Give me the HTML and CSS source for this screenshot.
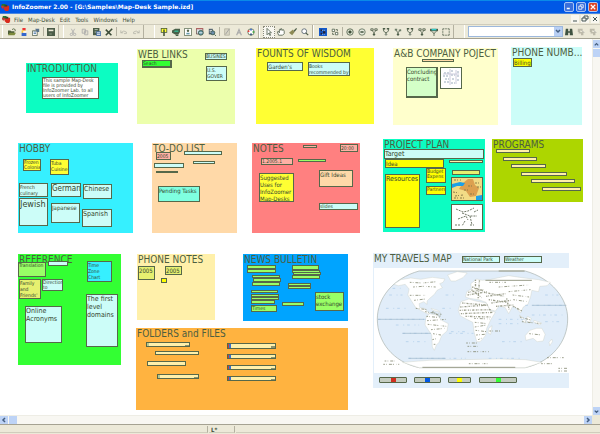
FILE: index.html
```html
<!DOCTYPE html>
<html lang="en">
<head>
<meta charset="utf-8">
<title>InfoZoomer 2.00 - [G:\Samples\Map-Desk Sample.izd]</title>
<link rel="stylesheet" href="styles.css">
</head>
<body>
<svg class="defs" aria-hidden="true">
  <symbol id="i-logo" viewBox="0 0 10 10"><path d="M1 1h4v4H0z" fill="#1f7a2e"/><path d="M0 3h3v3H1z" fill="#c33"/><path d="M4 3h5v4l-1 2H5L3 7z" fill="#d92b1c"/><path d="M4 2h3v2H4z" fill="#2a4a2a"/></symbol>
  <symbol id="i-open" viewBox="0 0 10 10"><path d="M0 3h3l1 1h4v4H0z" fill="#4c5c38"/><path d="M2 6h8L8 9H0z" fill="#7d8a3c"/><path d="M5 2q2-2 4 0v2" fill="none" stroke="#4c5c38"/></symbol>
  <symbol id="i-new" viewBox="0 0 10 10"><path d="M3 0h4v3H3z" fill="#e33"/><path d="M2 3h5v3H2z" fill="#fc3"/><path d="M2 6h6v4H2z" fill="#36c"/><path d="M4 4h4v2H4z" fill="#fff"/></symbol>
  <symbol id="i-props" viewBox="0 0 10 10"><path d="M.5 3.500h6v6h-6z" fill="#fff" stroke="#4c5c48"/><path d="M4 1h5v4H6z" fill="#57718c"/><path d="M2 5h3M2 7h3" stroke="#369"/></symbol>
  <symbol id="i-save" viewBox="0 0 10 10"><path d="M0 0h10v10H0z" fill="#4c5c48"/><path d="M2 2h6v2H2z" fill="#ece9d8"/><path d="M3 7h3v1H3z" fill="#9aa78a"/></symbol>
  <symbol id="i-cut" viewBox="0 0 10 10"><path d="M3 1l3 6M7 1L4 7" stroke="#aaa" fill="none"/><circle cx="3" cy="8" r="1.500" fill="none" stroke="#aaa"/><circle cx="7" cy="8" r="1.500" fill="none" stroke="#aaa"/></symbol>
  <symbol id="i-copy" viewBox="0 0 10 10"><path d="M1.500 1.500h4v5h-4zM4.500 3.500h4v5h-4z" fill="#e4e1d0" stroke="#aaa"/></symbol>
  <symbol id="i-paste" viewBox="0 0 10 10"><path d="M0 0h8v9H0z" fill="#4c5c48"/><path d="M4 4h6v6H4z" fill="#57a"/><path d="M2 2h4M2 5h2" stroke="#cdc"/><path d="M5 6h4M5 8h4" stroke="#fff"/></symbol>
  <symbol id="i-delete" viewBox="0 0 10 10"><path d="M1 2l7 7M9 1L1 9" stroke="#3c4c38" stroke-width="2"/></symbol>
  <symbol id="i-undo" viewBox="0 0 10 10"><path d="M1 3v3h3M1 6q4-4 7-1v2H5" fill="none" stroke="#b5b5aa"/></symbol>
  <symbol id="i-redo" viewBox="0 0 10 10"><path d="M9 3v3H6M9 6Q5 2 2 5v2h3" fill="none" stroke="#b5b5aa"/></symbol>
  <symbol id="i-sign" viewBox="0 0 10 10"><path d="M1 0h8v6H1z" fill="#4c5c38"/><path d="M2 1h6v4H2z" fill="#ff3"/><path d="M4 2h2v8H4z" fill="#4c5c38"/></symbol>
  <symbol id="i-cup" viewBox="0 0 10 10"><path d="M0 3l4-2h6v4L8 8H4L0 6z" fill="#486048"/><path d="M2 4l2-1h4v2H4z" fill="#39b08a"/><path d="M4 8h4v2H5z" fill="#486048"/></symbol>
  <symbol id="i-card" viewBox="0 0 10 10"><path d="M.5.500h9v9h-9z" fill="#fff" stroke="#57684c"/><circle cx="5" cy="3.500" r="1.500" fill="#57684c"/><path d="M3 8V6h4v2z" fill="#69a"/></symbol>
  <symbol id="i-web" viewBox="0 0 10 10"><path d="M.5.500h8v7h-8z" fill="#d9e0e8" stroke="#6a4c48"/><path d="M0 1h9" stroke="#c55"/><circle cx="6" cy="6" r="3" fill="#69a" stroke="#354"/><path d="M4 6h4" stroke="#fff"/></symbol>
  <symbol id="i-doc" viewBox="0 0 10 10"><path d="M1 1h5v7H1z" fill="#4c5c68"/><circle cx="6" cy="6" r="2.500" fill="#6c8cac" stroke="#354"/><path d="M2 3h3M2 5h2" stroke="#fff"/><path d="M8 8l2 2" stroke="#354"/></symbol>
  <symbol id="i-pen" viewBox="0 0 10 10"><path d="M2 1h6v8H2z" fill="#d8d5c4" stroke="#b5b2a2"/><path d="M3 8l5-7" stroke="#999"/></symbol>
  <symbol id="i-text" viewBox="0 0 10 10"><path d="M2 9l3-7 3 7M3 6h4" fill="none" stroke="#aaa" stroke-width="1.500"/></symbol>
  <symbol id="i-palette" viewBox="0 0 10 10"><circle cx="5" cy="5" r="4" fill="#fff" stroke="#57684c"/><path d="M1 3h2v2H1z" fill="#e33"/><path d="M4 1h2v2H4z" fill="#36c"/><path d="M7 4h2v2H7z" fill="#3a3"/><path d="M4 7h2v2H4z" fill="#247"/></symbol>
  <symbol id="i-cursor" viewBox="0 0 10 10"><path d="M2.500.500v8l2-2 1.500 3 1-.500-1.500-3H8z" fill="#fff" stroke="#4c5c48"/></symbol>
  <symbol id="i-hand" viewBox="0 0 10 10"><path d="M2 9L.5 5l1-1L3 6V2l1-1 1 2V1h1l1 2 1-1 1 2v3L7 9z" fill="#fff" stroke="#4c5c48"/></symbol>
  <symbol id="i-brush" viewBox="0 0 10 10"><path d="M0 6l5-4 2 3-3 4z" fill="#8c8a55"/><path d="M6 3l3-3 1 1-3 4z" fill="#4c5c48"/></symbol>
  <symbol id="i-zoom" viewBox="0 0 10 10"><circle cx="4" cy="4" r="3" fill="#fff" stroke="#4c5c68"/><path d="M6 6l3 3" stroke="#4c5c48" stroke-width="1.500"/></symbol>
  <symbol id="i-sel" viewBox="0 0 10 10"><path d="M0 0h10v10H0z" fill="#1559c9"/><path d="M2 2h2v2H2zM5 4h3v3H5zM2 6h2v2H2z" fill="#223"/><path d="M4 3h4M4 8h4" stroke="#cde" stroke-dasharray="1"/></symbol>
  <symbol id="i-swap" viewBox="0 0 10 10"><path d="M1.500 1.500h3v3h-3zM5.500 5.500h3v3h-3z" fill="#fff" stroke="#4c5c48"/><path d="M6 2h2v2M2 6v2h2" stroke="#4c5c48" fill="none"/></symbol>
  <symbol id="i-in" viewBox="0 0 10 10"><circle cx="5" cy="5" r="4" fill="#dfe5d2" stroke="#4c5c48"/><path d="M3 5h4M5 3v4" stroke="#354630" stroke-width="2"/></symbol>
  <symbol id="i-out" viewBox="0 0 10 10"><circle cx="5" cy="5" r="4" fill="#e6e9dc" stroke="#5c6c58"/><path d="M3 5h4" stroke="#4c5c48" stroke-width="2"/></symbol>
  <symbol id="i-n1" viewBox="0 0 10 10"><path d="M1 1h3v2H1zM6 1h3v2H6zM2.500 3l2.500 3 2.500-3M5 6v1" fill="none" stroke="#4c5c48"/><circle cx="5" cy="8" r="1.500" fill="#4c5c48"/></symbol>
  <symbol id="i-n2" viewBox="0 0 10 10"><path d="M2 1v3l3 2 3-2V1M5 6v1" fill="none" stroke="#4c5c48"/><path d="M1 0h3v2H1zM6 0h3v2H6z" fill="#4c5c48"/><circle cx="5" cy="8" r="1" fill="#fff" stroke="#4c5c48"/></symbol>
  <symbol id="i-n3" viewBox="0 0 10 10"><path d="M2 2l3 4 3-4M5 6v1" fill="none" stroke="#4c5c48"/><path d="M1 1h3v2H1zM6 2h3v2H6z" fill="#6c7c68"/><circle cx="5" cy="8" r="1.500" fill="#4c5c48"/></symbol>
  <symbol id="i-n4" viewBox="0 0 10 10"><path d="M0 1h10v3H0z" fill="#4c5c48"/><path d="M2 1h6v2H2z" fill="#3cc"/><path d="M2 4l3 3 3-3M5 6v4" fill="none" stroke="#4c5c48"/></symbol>
  <symbol id="i-frame" viewBox="0 0 10 10"><path d="M1 3V1h2M7 1h2v2M9 7v2H7M3 9H1V7M4 1h2M1 4v2M9 4v2M4 9h2" fill="none" stroke="#4c5c48"/></symbol>
  <symbol id="i-find" viewBox="0 0 10 10"><path d="M1 1h3v3h2V1h3l1 8H6V6H4v3H0z" fill="#3e5240"/></symbol>
  <symbol id="i-next" viewBox="0 0 10 10"><path d="M1 1h6v2H4v2h4v4H5V7H2V5H1z" fill="#bdbaaa"/><path d="M6 3l3 3" stroke="#999"/></symbol>
</svg>

<header class="titlebar">
  <svg class="logo"><use href="#i-logo"/></svg>
  <h1 class="titlebar-text">InfoZoomer 2.00 - [G:\Samples\Map-Desk Sample.izd]</h1>
  <button class="win-btn" aria-label="Minimize"><svg viewBox="0 0 8 8"><path d="M1 6h4" stroke="#fff" stroke-width="2"/></svg></button>
  <button class="win-btn" aria-label="Restore"><svg viewBox="0 0 8 8"><path d="M3 3V1h4v4H5M1 3h4v4H1z" fill="none" stroke="#fff"/></svg></button>
  <button class="win-btn win-close" aria-label="Close"><svg viewBox="0 0 8 8"><path d="M1 1l6 6M7 1L1 7" stroke="#fff" stroke-width="1.500"/></svg></button>
</header>

<nav class="menubar">
  <svg class="logo"><use href="#i-logo"/></svg>
  <button class="menu">File</button>
  <button class="menu">Map-Desk</button>
  <button class="menu">Edit</button>
  <button class="menu">Tools</button>
  <button class="menu">Windows</button>
  <button class="menu">Help</button>
  <span class="spacer"></span>
  <button class="doc-btn" aria-label="Minimize document"><svg viewBox="0 0 8 8"><path d="M2 6h4" stroke="#455"/></svg></button>
  <button class="doc-btn" aria-label="Restore document"><svg viewBox="0 0 8 8"><path d="M3 3V1h4v3H5M1 3h4v3H1z" fill="none" stroke="#455"/></svg></button>
  <button class="doc-btn" aria-label="Close document"><svg viewBox="0 0 8 8"><path d="M2 2l4 4M6 2L2 6" stroke="#455"/></svg></button>
</nav>

<div class="toolbar">
  <div class="group">
    <button class="tool" aria-label="Open"><svg><use href="#i-open"/></svg></button>
    <button class="tool" aria-label="New"><svg><use href="#i-new"/></svg></button>
    <button class="tool" aria-label="Properties"><svg><use href="#i-props"/></svg></button>
    <span class="sep"></span>
    <button class="tool" aria-label="Save"><svg><use href="#i-save"/></svg></button>
  </div>
  <div class="group group-next">
    <button class="tool" aria-label="Cut"><svg><use href="#i-cut"/></svg></button>
    <button class="tool" aria-label="Copy"><svg><use href="#i-copy"/></svg></button>
    <button class="tool" aria-label="Paste"><svg><use href="#i-paste"/></svg></button>
    <button class="tool" aria-label="Delete"><svg><use href="#i-delete"/></svg></button>
    <span class="sep"></span>
    <button class="tool" aria-label="Undo"><svg><use href="#i-undo"/></svg></button>
    <button class="tool" aria-label="Redo"><svg><use href="#i-redo"/></svg></button>
  </div>
  <div class="group group-apart">
    <button class="tool" aria-label="Add sign"><svg><use href="#i-sign"/></svg></button>
    <button class="tool" aria-label="Add board"><svg><use href="#i-cup"/></svg></button>
    <button class="tool" aria-label="Add picture"><svg><use href="#i-card"/></svg></button>
    <button class="tool" aria-label="Add web link"><svg><use href="#i-web"/></svg></button>
    <button class="tool" aria-label="Add document"><svg><use href="#i-doc"/></svg></button>
    <span class="sep"></span>
    <button class="tool" aria-label="Edit text"><svg><use href="#i-pen"/></svg></button>
    <button class="tool" aria-label="Font"><svg><use href="#i-text"/></svg></button>
    <button class="tool" aria-label="Colors"><svg><use href="#i-palette"/></svg></button>
  </div>
  <div class="group">
    <button class="tool tool-on" aria-label="Select"><svg><use href="#i-cursor"/></svg></button>
    <button class="tool" aria-label="Pan"><svg><use href="#i-hand"/></svg></button>
    <button class="tool" aria-label="Brush"><svg><use href="#i-brush"/></svg></button>
    <button class="tool" aria-label="Zoom"><svg><use href="#i-zoom"/></svg></button>
  </div>
  <div class="group">
    <button class="tool" aria-label="Overview"><svg><use href="#i-sel"/></svg></button>
    <button class="tool" aria-label="Swap"><svg><use href="#i-swap"/></svg></button>
    <span class="sep"></span>
    <button class="tool" aria-label="Zoom in"><svg><use href="#i-in"/></svg></button>
    <button class="tool" aria-label="Zoom out"><svg><use href="#i-out"/></svg></button>
    <button class="tool" aria-label="Level one"><svg><use href="#i-n1"/></svg></button>
    <button class="tool" aria-label="Level two"><svg><use href="#i-n2"/></svg></button>
    <button class="tool" aria-label="Level three"><svg><use href="#i-n3"/></svg></button>
    <button class="tool" aria-label="Level four"><svg><use href="#i-n2"/></svg></button>
    <button class="tool" aria-label="Level five"><svg><use href="#i-n1"/></svg></button>
    <button class="tool" aria-label="Filter"><svg><use href="#i-n4"/></svg></button>
    <button class="tool" aria-label="Fit frame"><svg><use href="#i-frame"/></svg></button>
  </div>
  <div class="group group-apart group-search">
    <div class="search-box">
      <select class="search" aria-label="Search text"><option></option></select>
      <svg class="search-arrow" viewBox="0 0 8 9"><path d="M2 3l2 2 2-2" fill="none" stroke="#445e80" stroke-width="1.500"/></svg>
    </div>
    <button class="tool" aria-label="Find"><svg><use href="#i-find"/></svg></button>
    <button class="tool" aria-label="Find next"><svg><use href="#i-next"/></svg></button>
    <button class="tool" aria-label="Find previous"><svg><use href="#i-next"/></svg></button>
  </div>
</div>

<div class="workspace">
  <main class="desk" id="desk"></main>
  <div class="scroll scroll-v">
    <button class="arrow" aria-label="Scroll up"><svg viewBox="0 0 8 8"><path d="M2 5l2-2 2 2" fill="none" stroke="#445e80" stroke-width="1.500"/></svg></button>
    <span class="thumb"></span>
    <span class="spacer"></span>
    <button class="arrow" aria-label="Scroll down"><svg viewBox="0 0 8 8"><path d="M2 3l2 2 2-2" fill="none" stroke="#445e80" stroke-width="1.500"/></svg></button>
  </div>
  <div class="scroll scroll-h">
    <button class="arrow" aria-label="Scroll left"><svg viewBox="0 0 8 8"><path d="M5 2L3 4l2 2" fill="none" stroke="#445e80" stroke-width="1.500"/></svg></button>
    <span class="thumb"></span>
    <span class="spacer"></span>
    <button class="arrow" aria-label="Scroll right"><svg viewBox="0 0 8 8"><path d="M3 2l2 2-2 2" fill="none" stroke="#445e80" stroke-width="1.500"/></svg></button>
  </div>
</div>

<footer class="status">
  <span class="cell cell-main"></span>
  <span class="cell cell-mark">L*</span>
  <span class="cell cell-rest"></span>
</footer>

<template id="world">
  <svg class="world" viewBox="24 69 588 315" preserveAspectRatio="none" role="img" aria-label="World map">
    <path class="sea" d="M160 78H480C560 100 608 160 608 222C608 290 560 350 480 368H160C80 350 34 290 34 222C34 160 80 100 160 78Z"/>
    <g class="land">
      <path d="M84 118L105 104L135 99L165 103L200 97L238 102L232 112L222 116L230 128L214 136L206 148L192 160L184 168L184 178L174 170L160 176L162 188L176 190L192 207L184 206L150 188L136 166L126 150L130 132L118 118L98 122Z"/>
      <path d="M190 206L214 210L228 226L248 236L244 258L228 272L220 292L212 300L206 316L200 306L198 270L178 240L180 220Z"/>
      <path d="M246 90L275 80L305 84L292 98L270 108L256 108Z"/>
      <path d="M286 170L310 162L330 168L362 174L374 196L390 202L376 224L364 250L360 272L344 290L334 290L326 262L322 232L302 222L284 212L278 196Z"/>
      <path d="M300 156L304 140L318 132L316 116L334 102L350 106L372 104L400 98L430 92L470 98L520 104L556 112L546 122L524 124L520 140L500 136L496 156L488 178L474 186L466 204L452 188L442 184L430 206L420 188L402 182L390 198L374 194L362 172L340 164L312 160Z"/>
      <path d="M480 272L494 256L514 250L530 250L540 268L534 288L516 290L504 280L482 286Z"/>
      <path d="M462 210l14 10 8 14-8-2zM486 214l12 6-4 14-10-6zM506 226l24 8-6 6-18-8zM552 292l8-10 2 8-8 12zM370 250l10-8-4 26-8-4zM196 190l20 6 8 6-22-6z"/>
      <path d="M110 352L190 346L290 344L400 342L480 344L530 352L480 368H160Z"/>
    </g>
    <g class="names">
      <path d="M132 112l38 2 44-4M142 126l30-2 38 2M132 151h46M145 166l34-4M150 190l38 4"/>
      <path d="M178 200l50 8M182 214l44 4M184 227l58-4M186 238l56 6M196 254l42-4M202 266l24 4M200 284l16-4M204 298h8"/>
      <path d="M326 220l46 2M328 232l38 4M328 246l36-6M330 256l34 4M332 270l26-2M338 284l10-4"/>
      <path d="M372 112h50M400 126l90-6M430 140l66-6M442 150l50 6M444 164l44 6"/>
      <path d="M464 216l36 10M470 230l60 6M492 266l38 4M372 258h32M302 294h38M306 304h30M306 320h64"/>
      <path d="M56 348h30M52 358h48M546 338h52M528 356h32M580 370h28M580 378h28M310 356h58"/>
    </g>
    <g class="names names-dense">
      <path d="M330 104v32M342 106l-4 54M320 126l34 12M308 142l46-8M306 150l60-10M318 134l30 24"/>
      <path d="M290 174l70 6M284 186l84-6M282 196l94-2M286 206l100-4M300 214l76 2"/>
      <path d="M356 142l62 12M362 154l58-8M370 164l56 8M378 174l58-8M392 184l52-4M424 160l8 36M444 184l26 14M200 200l24 14"/>
    </g>
    <g class="sea-names">
      <path d="M70 150H110M60 190H120M90 240H160M120 290H180M240 150H270M230 190H262M256 260H300M400 236H460M410 290H470M540 150H580M500 210H592M540 230H590M80 130H104"/>
      <path d="M36 223H180M110 265H196M250 265H324M480 181H604M128 340H300M370 340H470M400 223H480"/>
    </g>
    <path class="grid" d="M110 265H196M36 223H175M500 181H604M128 340H240"/>
    <path class="dark" d="M170 367H450M400 78H478M360 106H500"/>
  </svg>
</template>
<script src="app.js"></script>
</body>
</html>
```
FILE: styles.css
```css
:root {
  --ink: #56684a;
  --face: #ece9d8;
  --edge: #b4b1a0;
  --sans: "DejaVu Sans Condensed", "DejaVu Sans", sans-serif;
}

* { box-sizing: border-box; }

body {
  margin: 0;
  height: 100vh;
  display: flex;
  flex-direction: column;
  overflow: hidden;
  background: #fff;
  color: #3f4f3a;
  font-family: var(--sans);
  font-size: 6px;
}

button {
  margin: 0;
  padding: 0;
  border: 0;
  background: none;
  color: inherit;
  font: inherit;
}

svg { display: block; }
.defs { display: none; }
.spacer { flex: 1; }
.logo { width: 9px; height: 9px; }

/* Title bar */
.titlebar {
  flex: none;
  display: flex;
  align-items: center;
  gap: 2px;
  height: 14px;
  padding: 0 2px 0 1px;
  border-top: 1px solid #0a8ae8;
  border-bottom: 1px solid #4a86e0;
  background: #0058e6;
}
.titlebar-text {
  flex: 1;
  margin: 0;
  color: #fff;
  font: bold 6px/12px "DejaVu Sans", sans-serif;
  white-space: nowrap;
}
.win-btn {
  width: 10px;
  height: 10px;
  padding: 1px;
  border: 1px solid #a8c4f4;
  border-radius: 2px;
  background: #3a6fdc;
}
.win-close { background: #dc4426; }

/* Menu bar */
.menubar {
  flex: none;
  display: flex;
  align-items: center;
  height: 10px;
  padding: 0 1px 0 2px;
  background: var(--face);
}
.menu { padding: 0 2px 0 3px; line-height: 9px; }
.doc-btn { width: 8px; height: 8px; margin-left: 2px; background: #f8f7f0; }

/* Toolbar */
.toolbar {
  flex: none;
  display: flex;
  height: 15px;
  padding-left: 2px;
  border-top: 1px solid #cfccbc;
  border-bottom: 1px solid #a5a292;
  background: var(--face);
}
.group {
  display: flex;
  align-items: center;
  padding: 0 1px 0 3px;
  border-left: 1px solid #fff;
  border-right: 1px solid var(--edge);
}
.group-next { margin-left: 4px; }
.group-apart { margin-left: 10px; }
.group-search { flex: 1; border-right: 0; }
.tool {
  flex: none;
  width: 12px;
  height: 12px;
  padding: 2px;
}
.tool svg { width: 8px; height: 8px; }
.tool-on { padding: 1px; border: 1px dotted #8a8a7a; background: #f8f7f0; }
.sep { width: 1px; height: 9px; margin: 0 1px; background: var(--edge); }
.search-box { position: relative; flex: 1; min-width: 0; height: 11px; }
.search {
  appearance: none;
  display: block;
  width: 100%;
  height: 100%;
  border: 1px solid #9db8dc;
  border-radius: 0;
  background: #fff;
}
.search-arrow {
  position: absolute;
  top: 1px;
  right: 1px;
  width: 8px;
  height: 9px;
  background: #b8cff4;
  pointer-events: none;
}

/* Workspace and scroll bars */
.workspace {
  flex: 1;
  min-height: 0;
  display: grid;
  grid-template: minmax(0, 1fr) 9px / minmax(0, 1fr) 8px;
  background: var(--face);
}
.desk {
  position: relative;
  overflow: hidden;
  background: #fff;
}
.scroll { display: flex; gap: 1px; background: #f8f7f2; }
.scroll-v { flex-direction: column; padding-top: 1px; border-left: 1px solid #eeede5; }
.scroll-h { border-top: 1px solid #eeede5; }
.arrow, .thumb {
  flex: none;
  width: 8px;
  height: 8px;
  background: #bdd3f6;
}
.scroll-v .arrow, .scroll-v .thumb { width: 7px; }

/* Boards and notes */
.board, .note { position: absolute; }
.board-title {
  margin: 0;
  padding-left: 1px;
  color: #4c5e40;
  font: 10px/12px var(--sans);
  white-space: nowrap;
}
.note {
  margin: 0;
  overflow: hidden;
  border: 1px solid var(--ink);
  color: #34462e;
}
.note-bold { border-right-width: 2px; border-bottom-width: 2px; }
.text-xs { font-size: 5px; line-height: 5px; white-space: pre-line; }
.text-s { font-size: 5px; line-height: 6px; }
.text-m { font-size: 6px; line-height: 7px; }
.text-l { font-size: 7px; line-height: 8px; }
.text-xl { font-size: 8px; line-height: 9px; }
.text-xxl { font-size: 9px; line-height: 10px; }

.mint { background: #0cfdc2; }
.aqua { background: #7fffe0; }
.cyan { background: #ccfdf8; }
.sky { background: #36f0ff; }
.blue { background: #00a4ff; }
.lime { background: #ecffac; }
.green { background: #33ff33; }
.leaf { background: #99ff66; }
.pale { background: #d4ffc8; }
.yellow { background: #ffff33; }
.gold { background: #ffff00; }
.olive { background: #e6f070; }
.moss { background: #add600; }
.ivory { background: #ffffcc; }
.cream { background: #fff0aa; }
.peach { background: #ffd9a8; }
.orange { background: #ffb340; }
.coral { background: #ff8080; }
.rose { background: #ffb0a4; }
.ice { background: #e3effa; }
.white { background: #fff; }

.chip { display: flex; justify-content: center; background: #c4ccc0; border-radius: 1px; }
.chip::before { content: ""; width: 5px; background: currentColor; }
.chip-red { color: #d03020; }
.chip-blue { color: #0058e6; }
.chip-yellow { color: #ffff00; }
.chip-green { color: #33ff33; }

.file { display: flex; justify-content: space-between; }
.file::before { content: ""; width: 2px; background: #b8c890; }
.file::after { content: ""; width: 4px; height: 2px; margin-top: 2px; background: #8c9470; }
.file-web::before { width: 3px; background: linear-gradient(90deg, #d04030 1px, #3a70d0 1px); }

.note svg { width: 100%; height: 100%; }

.world-sheet { position: absolute; background: #fff; }
.world { width: 100%; height: 100%; }
.sea { fill: #e1edf9; stroke: #a8b0ac; stroke-width: 2; }
.land { fill: #fff; stroke: #c4c8b8; stroke-width: 1; }
.names { fill: none; stroke: #848870; stroke-width: 3; stroke-dasharray: 5 4 2 6 9 3 3 8 1 4; opacity: .8; }
.names-dense { stroke-dasharray: 4 3 2 4 6 2 1 3; stroke-width: 4; }
.sea-names { fill: none; stroke: #a8c8e8; stroke-width: 2; stroke-dasharray: 8 14 3 9; }
.grid { fill: none; stroke: #9cb4c8; stroke-width: 2; }
.dark { fill: none; stroke: #989c88; stroke-width: 3; }

/* Status bar */
.status {
  flex: none;
  display: flex;
  gap: 1px;
  height: 10px;
  padding: 1px 0;
  border-top: 1px solid #a5a292;
  background: var(--face);
  line-height: 7px;
}
.cell { border-right: 1px solid var(--edge); border-bottom: 1px solid #d0cdbc; }
.cell-main { flex: 0 1 208px; }
.cell-mark { flex: 0 0 26px; padding-left: 2px; font-weight: bold; }
.cell-rest { flex: 1; border-right: 0; }
```
FILE: app.js
```js
// Items are stored in window coordinates; the desk starts below the bars.
const DESK_TOP = 39;

// [title, x, y, width, height, tone]
const boards = [
  ["INTRODUCTION", 26, 63, 92, 50, "mint"],
  ["WEB LINKS", 137, 49, 98, 75, "lime"],
  ["FOUNTS OF WISDOM", 256, 48, 118, 76, "yellow"],
  ["A&B COMPANY POJECT", 393, 48, 105, 77, "ivory"],
  ["PHONE NUMB...", 511, 47, 71, 78, "cyan"],
  ["HOBBY", 18, 143, 115, 90, "sky"],
  ["TO-DO LIST", 152, 143, 85, 90, "peach"],
  ["NOTES", 252, 143, 108, 90, "coral"],
  ["PROJECT PLAN", 383, 139, 102, 93, "mint"],
  ["PROGRAMS", 492, 139, 91, 63, "moss"],
  ["REFERENCE", 18, 254, 103, 111, "green"],
  ["PHONE NOTES", 137, 254, 78, 66, "cream"],
  ["NEWS BULLETIN", 243, 254, 105, 67, "blue"],
  ["FOLDERS and FILES", 136, 328, 212, 82, "orange"],
  ["MY TRAVELS MAP", 373, 253, 196, 135, "ice"],
];

// [x, y, width, height, classes, text]
const notes = [
  [42, 77, 57, 22, "white text-xs", "This sample Map-Desk\nfile is provided by\nInfoZoomer Lab. to all\nusers of InfoZoomer and"],
  [142, 60, 30, 8, "green text-xs note-bold", "Seach"],
  [205, 53, 22, 7, "cyan text-xs", "BUSINES"],
  [206, 66, 21, 15, "cyan text-s", "U.S. GOVER"],
  [267, 62, 36, 9, "cyan text-m", "Garden's"],
  [308, 62, 42, 14, "cyan text-s", "Books recommended by"],
  [422, 59, 32, 3, "peach"],
  [406, 67, 32, 31, "pale text-m note-bold", "Concluding contract"],
  [440, 67, 22, 22, "white", "", "sheet"],
  [513, 58, 19, 9, "gold text-m", "Billing"],

  [23, 159, 18, 12, "yellow text-xs", "Frozen Colonial"],
  [50, 159, 19, 16, "yellow text-s", "Tuba Cuisine"],
  [19, 183, 29, 14, "cyan text-s", "French culinary"],
  [51, 183, 30, 14, "cyan text-xl", "German"],
  [83, 184, 29, 15, "cyan text-l", "Chinese"],
  [19, 198, 29, 28, "cyan text-xxl", "Jewish"],
  [51, 203, 29, 20, "cyan text-m", "Japanese"],
  [82, 209, 30, 18, "cyan text-l", "Spanish"],

  [156, 152, 15, 8, "rose text-s", "2005"],
  [184, 151, 38, 4, "cyan"],
  [154, 163, 30, 5, "cyan"],
  [193, 161, 22, 3, "cyan"],
  [156, 171, 22, 2, "cyan"],
  [158, 186, 42, 16, "aqua text-m", "Pending Tasks"],

  [303, 145, 14, 3, "rose"],
  [340, 144, 18, 8, "rose text-s", "20:00"],
  [261, 158, 32, 7, "rose text-xs", "1.2005.1"],
  [298, 159, 28, 3, "leaf"],
  [259, 173, 35, 29, "yellow text-m", "Suggested Uses for InfoZoomer Map-Desks"],
  [319, 170, 34, 17, "peach text-m", "Gift Ideas"],
  [319, 203, 39, 7, "cyan text-xs", "slides"],

  [384, 149, 100, 10, "cyan text-l", "Target"],
  [385, 159, 59, 9, "gold text-m", "Idea"],
  [449, 160, 34, 3, "cream"],
  [385, 174, 35, 54, "gold text-l", "Resources"],
  [426, 168, 20, 15, "gold text-xs", "Budget\nExpens"],
  [426, 186, 20, 9, "gold text-xs", "Partners"],
  [452, 170, 28, 5, "olive"],
  [451, 177, 32, 24, "cream", "", "atlas"],
  [451, 204, 32, 26, "white", "", "sketch"],

  [496, 149, 34, 4, "cream"],
  [503, 157, 34, 4, "cream"],
  [511, 164, 35, 4, "cream"],
  [521, 172, 46, 4, "cream"],
  [531, 179, 44, 4, "cream"],
  [542, 187, 39, 4, "cream"],

  [18, 262, 28, 15, "leaf text-xs", "Translation"],
  [48, 261, 20, 5, "cyan"],
  [87, 261, 25, 21, "sky text-s", "Time Zone Chart"],
  [19, 279, 22, 20, "olive text-s", "Family and Friends'"],
  [42, 279, 21, 12, "cyan text-xs", "Direction\nto Autom"],
  [25, 306, 37, 37, "cyan text-l", "Online Acronyms"],
  [86, 294, 32, 53, "cyan text-l", "The first level domains"],

  [138, 266, 17, 14, "olive text-m", "2005"],
  [165, 266, 17, 9, "olive text-m", "2005"],
  [161, 278, 6, 5, "gold"],

  [247, 265, 29, 4, "leaf"],
  [247, 269, 29, 4, "leaf"],
  [252, 275, 28, 3, "leaf"],
  [253, 278, 28, 4, "leaf"],
  [252, 282, 28, 4, "leaf"],
  [292, 265, 27, 5, "leaf"],
  [292, 270, 28, 3, "leaf"],
  [293, 272, 28, 3, "leaf"],
  [292, 275, 28, 4, "leaf"],
  [288, 283, 23, 3, "leaf"],
  [288, 286, 23, 3, "leaf"],
  [251, 290, 27, 3, "leaf"],
  [251, 294, 28, 3, "leaf"],
  [251, 297, 28, 3, "leaf"],
  [251, 300, 24, 4, "leaf"],
  [251, 305, 26, 7, "leaf text-xs", "Times"],
  [282, 302, 22, 4, "leaf"],
  [315, 292, 29, 19, "leaf text-m", "stock exchange"],

  [146, 342, 44, 5, "cream file"],
  [155, 351, 44, 4, "cream"],
  [147, 361, 39, 5, "cream"],
  [157, 374, 42, 5, "cream file"],
  [227, 343, 49, 6, "cream file file-web"],
  [227, 354, 49, 5, "cream file file-web"],
  [227, 365, 49, 5, "cream file file-web"],
  [227, 376, 49, 5, "cream file file-web"],

  [462, 256, 38, 7, "cyan text-xs", "National Park"],
  [504, 256, 38, 7, "cyan text-xs", "Weather"],
  [379, 377, 28, 6, "chip chip-red"],
  [414, 377, 27, 6, "chip chip-blue"],
  [448, 377, 23, 6, "chip chip-yellow"],
  [479, 377, 38, 6, "chip chip-green"],
];

const pictures = {
  sheet: '<svg viewBox="0 0 20 20"><path d="M3 5h5M2 8h6M4 11h4M3 14h5M10 3h3M10 7h4M11 11h3M10 15h4M16 4h2M16 8h2M16 12h2" stroke="#9ab" stroke-dasharray="2 1"/><path d="M9 1v16M15 2v14M2 6h16" stroke="#ccd" fill="none"/></svg>',
  atlas: '<svg viewBox="0 0 30 22" preserveAspectRatio="none"><path d="M0 0h30v22H0z" fill="#f2dc86"/><path d="M11 5l5-4 5 0 2 6 4 3-3 8-6 1-4-6-7-2z" fill="#dca050"/><path d="M0 6l8-2 5 1-2 3-6 0-5 2zM24 18l6-1v5h-6z" fill="#1ca0e8"/><path d="M1 14l6 1M3 18l8-1M12 12h6M16 8h4M2 20h12M23 5h5M25 9h4M18 16h5M2 2h7" stroke="#8a7c48" stroke-dasharray="2 1 1 2"/></svg>',
  sketch: '<svg viewBox="0 0 30 24" preserveAspectRatio="none"><path d="M4 4l7 3 5-1 6-3M10 8l8 3 7 0M6 14l8-3 2 4M18 11l2 9M3 20h5M18 20h4M13 16l-3 5M22 7l4-2" fill="none" stroke="#707868" stroke-dasharray="2 1"/></svg>',
};

const desk = document.getElementById("desk");

function place(tag, className, [x, y, width, height]) {
  const el = document.createElement(tag);
  el.className = className;
  el.style.left = x + "px";
  el.style.top = y - DESK_TOP + "px";
  el.style.width = width + "px";
  el.style.height = height + "px";
  desk.append(el);
  return el;
}

for (const [title, x, y, width, height, tone] of boards) {
  const board = place("section", "board " + tone, [x, y, width, height]);
  const heading = document.createElement("h2");
  heading.className = "board-title";
  heading.textContent = title;
  board.append(heading);
}

const sheet = place("div", "world-sheet", [374, 268, 195, 105]);
sheet.append(document.getElementById("world").content.cloneNode(true));

for (const [x, y, width, height, classes, text, picture] of notes) {
  const note = place("p", "note " + classes, [x, y, width, height]);
  if (picture) note.innerHTML = pictures[picture];
  else if (text) note.textContent = text;
}
```
